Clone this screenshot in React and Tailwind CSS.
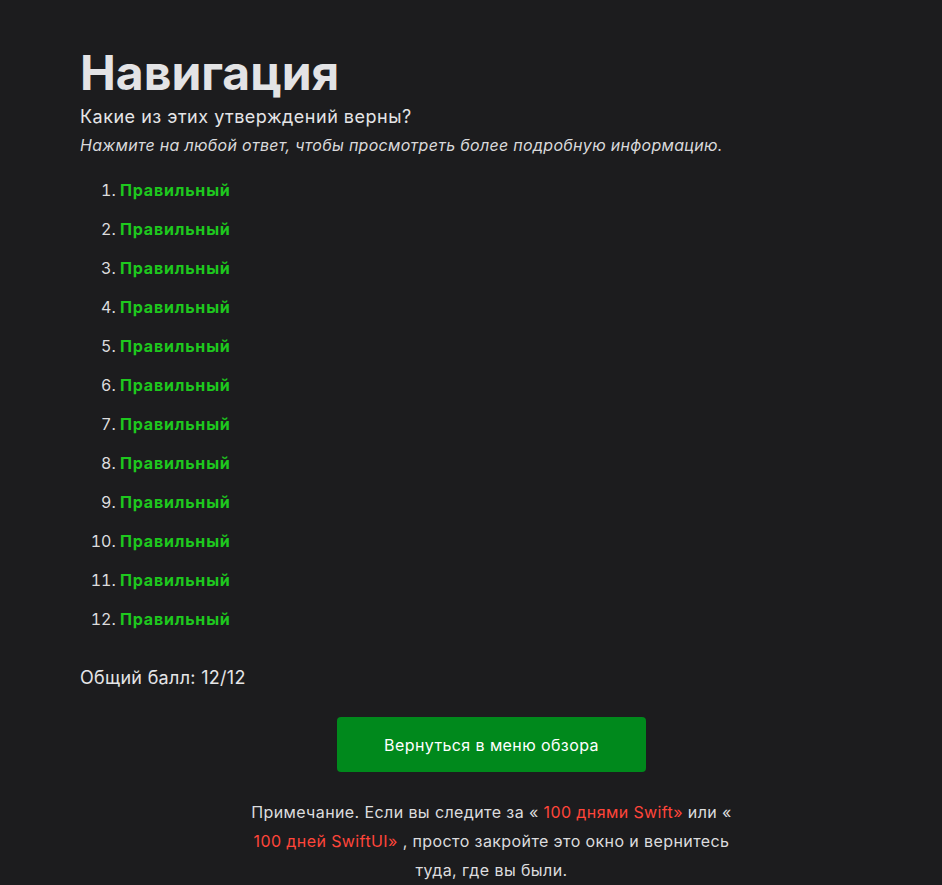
import React from 'react';

const ANSWERS = Array.from({ length: 12 }, () => 'Правильный');

export default function App() {
  return (
    <div className="min-h-[885px] bg-[#1c1c1e] text-[#e5e5e7] font-['Inter','Liberation_Sans',sans-serif]">
      <div className="pl-[80px] pr-[39px] pt-[44px]">
        {/* Header */}
        <h1 className="text-[48px] font-bold leading-[58px] text-[#e3e3e5]">Навигация</h1>
        <p className="text-[18px] leading-[26px] mt-[2px] tracking-[0.5px]">Какие из этих утверждений верны?</p>
        <p className="text-[16px] leading-[26px] italic mt-[2px] tracking-[0.3px] text-[#d9d9db]">
          Нажмите на любой ответ, чтобы просмотреть более подробную информацию.
        </p>

        {/* Answers */}
        <ol className="list-decimal pl-[40px] mt-[20px] text-[16px] leading-[24px]">
          {ANSWERS.map((a, i) => (
            <li key={i} className="mb-[15px] marker:text-[#dcdcde]">
              <span className="font-bold tracking-[0.8px] text-[#1ec81e]">{a}</span>
            </li>
          ))}
        </ol>

        <p className="text-[18px] leading-[26px] mt-[34px] tracking-[0.3px]">Общий балл: 12/12</p>

        <div className="flex justify-center mt-[26px]">
          <button className="w-[309px] h-[55px] rounded-[4px] bg-[#00891c] text-white text-[16px] tracking-[0.4px]">
            Вернуться в меню обзора
          </button>
        </div>

        <p className="max-w-[500px] mx-auto text-center text-[16px] leading-[29px] mt-[26px] tracking-[0.4px] text-[#dcdcde]">
          Примечание. Если вы следите за « <span className="text-[#ff453a]">100 днями Swift»</span> или «
          <br />
          <span className="text-[#ff453a]">100 дней SwiftUI»</span> , просто закройте это окно и вернитесь
          <br />
          туда, где вы были.
        </p>
      </div>
    </div>
  );
}
